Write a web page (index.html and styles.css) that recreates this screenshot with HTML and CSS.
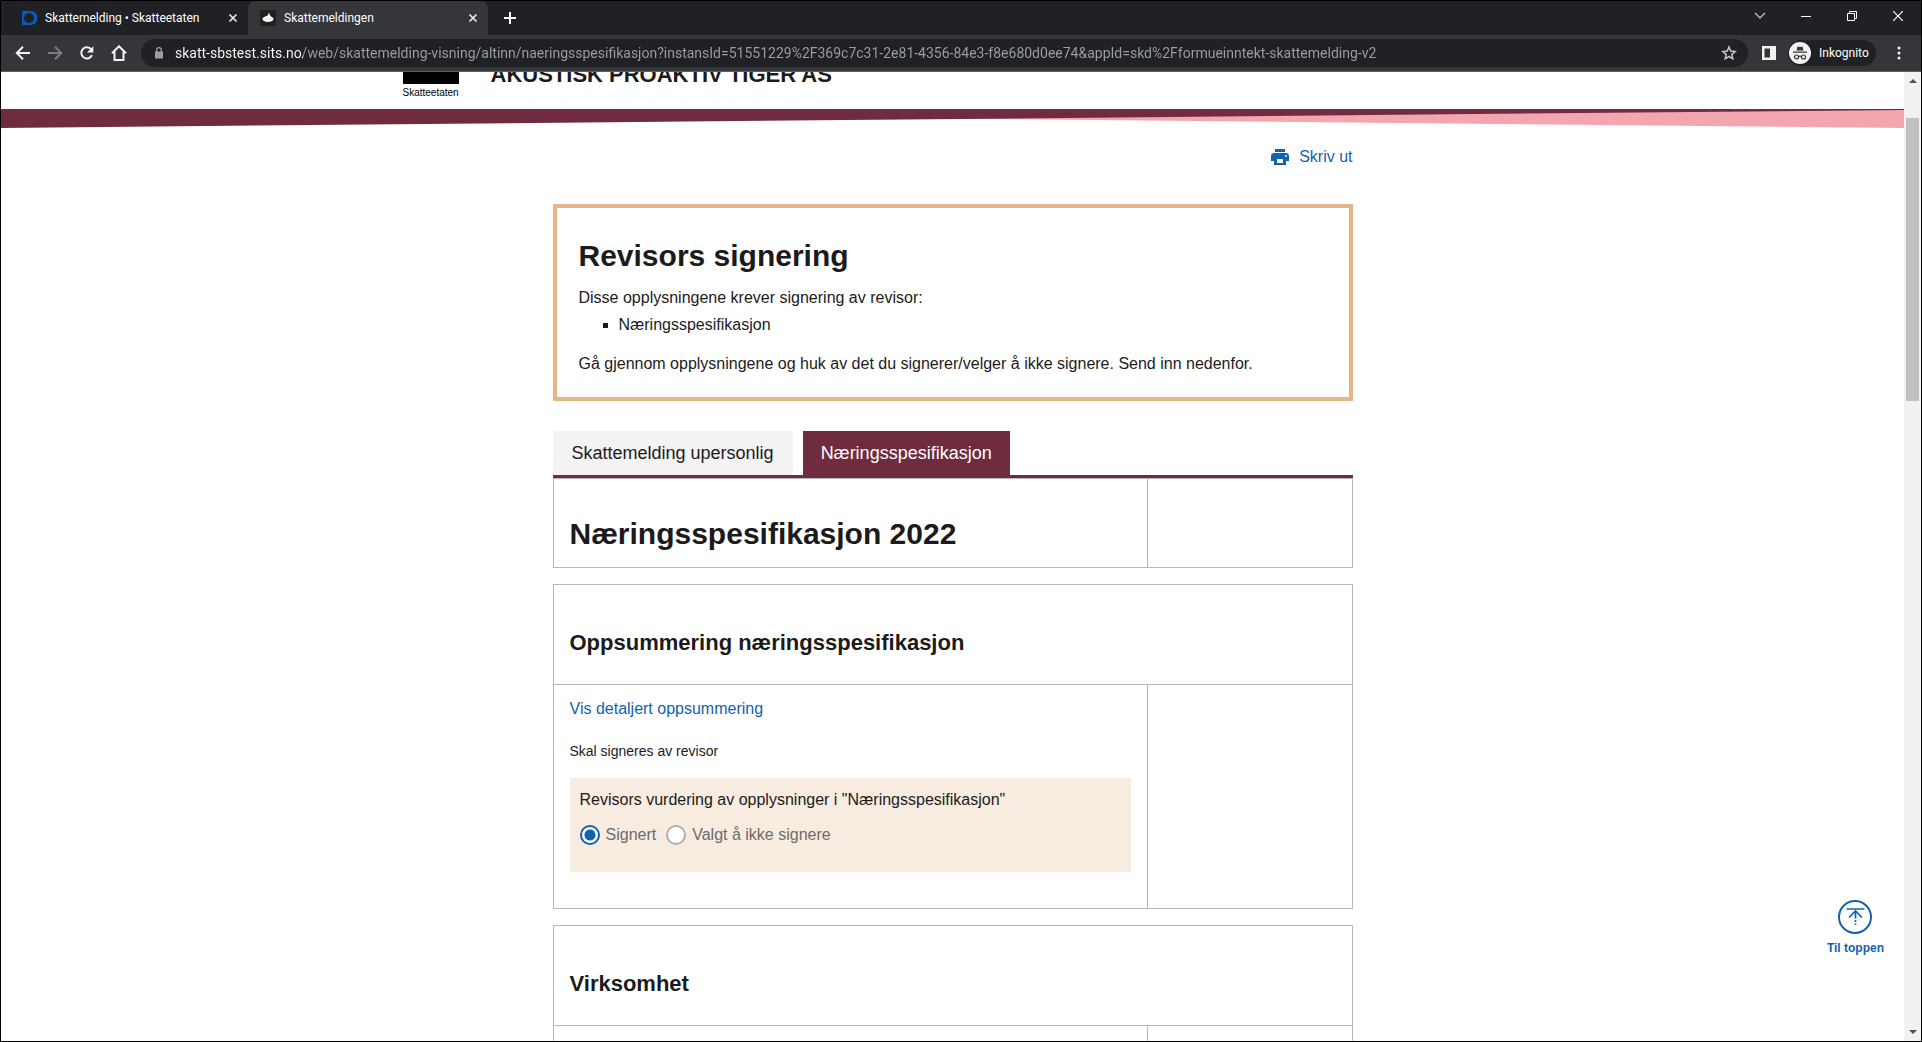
FILE: index.html
```
<!DOCTYPE html>
<html lang="no">
<head>
    <meta charset="UTF-8">
    <meta name="viewport" content="width=device-width, initial-scale=1.0">
    <title>Skattemeldingen</title>
    <link rel="stylesheet" href="styles.css">
</head>
<body>
    <div class="browser">
        <div class="tabstrip">
            <div class="browser-tab">
                <svg class="favicon" viewBox="0 0 16 16"><path d="M1 1h8.500a6.800 6.800 0 0 1 0 14H1z" fill="#0a5cb8"/><circle cx="8" cy="8" r="5" fill="#202124"/></svg>
                <span class="browser-tab-title">Skattemelding • Skatteetaten</span>
                <button class="icon-button" aria-label="Lukk fane"><svg width="10" height="10" viewBox="0 0 10 10"><path d="M1.500 1.500l7 7M8.500 1.500l-7 7" stroke="#e8eaed" stroke-width="1.700"/></svg></button>
            </div>
            <div class="browser-tab browser-tab-active">
                <svg class="favicon" viewBox="0 0 16 16"><path d="M0 0h16v16H0z" fill="#231f20"/><ellipse cx="8" cy="9" rx="5.500" ry="3" fill="#fff"/><path d="M7 7l1-3 1.500-1v2l1.500 1v2z" fill="#fff"/><path d="M4.500 8.500q3.500 2 7-.5" stroke="#bbb" stroke-width=".6" fill="none"/></svg>
                <span class="browser-tab-title">Skattemeldingen</span>
                <button class="icon-button" aria-label="Lukk fane"><svg width="10" height="10" viewBox="0 0 10 10"><path d="M1.500 1.500l7 7M8.500 1.500l-7 7" stroke="#e8eaed" stroke-width="1.700"/></svg></button>
            </div>
            <button class="icon-button new-tab" aria-label="Ny fane"><svg width="12" height="12" viewBox="0 0 12 12"><path d="M6 0v12M0 6h12" stroke="#fff" stroke-width="2"/></svg></button>
            <div class="window-buttons">
                <button class="icon-button" aria-label="Søk i faner"><svg width="12" height="12" viewBox="0 0 12 12"><path d="M1 3l5 5 5-5" fill="none" stroke="#d0d0d0" stroke-width="1.200"/></svg></button>
                <button class="icon-button" aria-label="Minimer"><svg width="10" height="10" viewBox="0 0 10 10"><path d="M0 5.500h10" stroke="#fff"/></svg></button>
                <button class="icon-button" aria-label="Gjenopprett"><svg width="10" height="10" viewBox="0 0 10 10"><path d="M.5 2.500h7v7h-7zM2.500 2.500v-2h7v7h-2" fill="none" stroke="#fff"/></svg></button>
                <button class="icon-button" aria-label="Lukk"><svg width="10" height="10" viewBox="0 0 10 10"><path d="M0 0l10 10M10 0L0 10" stroke="#fff" stroke-width="1.200"/></svg></button>
            </div>
        </div>

        <div class="toolbar">
            <button class="icon-button nav-button" aria-label="Tilbake"><svg width="16" height="16" viewBox="0 0 16 16"><path d="M15 8H2.500M8 1.800L1.800 8 8 14.200" fill="none" stroke="#f1f3f4" stroke-width="2"/></svg></button>
            <button class="icon-button nav-button" aria-label="Frem"><svg width="16" height="16" viewBox="0 0 16 16"><path d="M1 8h12.500M8 1.800L14.200 8 8 14.200" fill="none" stroke="#7d7e81" stroke-width="2"/></svg></button>
            <button class="icon-button nav-button" aria-label="Last inn på nytt"><svg width="16" height="16" viewBox="0 0 16 16"><path d="M13 10.200A5.600 5.600 0 1 1 12.300 4.400" fill="none" stroke="#f1f3f4" stroke-width="2"/><path d="M14.300 1.200v6.300H8z" fill="#f1f3f4"/></svg></button>
            <button class="icon-button nav-button" aria-label="Startside"><svg width="16" height="16" viewBox="0 0 16 16"><path d="M1 8.300L8 1.300l7 7M3.500 6.500v8.500h9V6.500" fill="none" stroke="#f1f3f4" stroke-width="2"/></svg></button>
            <div class="address-bar">
                <svg width="10" height="12" viewBox="0 0 10 12"><path d="M1 4.500h8V11.500H1z" fill="#9aa0a6"/><path d="M2.700 5V3a2.300 2.300 0 0 1 4.600 0v2" fill="none" stroke="#9aa0a6" stroke-width="1.300"/></svg>
                <input class="address" type="text" aria-label="Adresse" value="skatt-sbstest.sits.no/web/skattemelding-visning/altinn/naeringsspesifikasjon?instansId=51551229%2F369c7c31-2e81-4356-84e3-f8e680d0ee74&amp;appId=skd%2Fformueinntekt-skattemelding-v2">
                <button class="icon-button" aria-label="Bokmerk"><svg width="16" height="16" viewBox="0 0 16 16"><path d="M8 2l1.700 4.100 4.500.4-3.400 2.900 1 4.400L8 11.500l-3.800 2.300 1-4.400L1.800 6.500l4.500-.4z" fill="none" stroke="#c4c7c9" stroke-width="1.500"/></svg></button>
            </div>
            <button class="icon-button panel-button" aria-label="Sidepanel"><svg width="14" height="14" viewBox="0 0 14 14"><path d="M0 0h14v14H0z" fill="#f1f3f4"/><path d="M2.500 2.500H8v9H2.500z" fill="#35363a"/></svg></button>
            <button class="profile">
                <svg width="22" height="22" viewBox="0 0 22 22"><circle cx="11" cy="11" r="11" fill="#f1f3f4"/><path d="M7.500 8.500l1-4 2.500.5 2.500-.5 1 4zM4 9.500h14v1.200H4z" fill="#35363a"/><g fill="none" stroke="#35363a" stroke-width="1.200"><circle cx="7.500" cy="15" r="2"/><circle cx="14.500" cy="15" r="2"/><path d="M9.500 14.700q1.500-1 3 0"/></g></svg>
                Inkognito
            </button>
            <button class="icon-button menu-button" aria-label="Meny"><svg width="4" height="14" viewBox="0 0 4 14"><g fill="#f1f3f4"><circle cx="2" cy="2" r="1.500"/><circle cx="2" cy="7" r="1.500"/><circle cx="2" cy="12" r="1.500"/></g></svg></button>
        </div>

        <div class="viewport">
            <div class="page">
                <header class="page-header">
                    <div class="header-inner">
                        <div class="logo">
                            <span class="logo-mark"></span>
                            <span class="logo-name">Skatteetaten</span>
                        </div>
                        <p class="company">AKUSTISK PROAKTIV TIGER AS</p>
                    </div>
                </header>
                <svg class="stripe" viewBox="0 0 1904 19" preserveAspectRatio="none">
                    <path d="M950 9.500L1904 0v19z" fill="#f4a6b0"/>
                    <path d="M0 0h1904v1L0 19z" fill="#6f2c3f"/>
                </svg>

                <main class="content">
                    <a class="print" href="#">
                        <svg width="18" height="16" viewBox="0 0 18 16"><path d="M4 0h10v3H4zM3 4h12a3 3 0 0 1 3 3v5h-3V9H3v3H0V7a3 3 0 0 1 3-3z" fill="#1362ae"/><path d="M3 8h12v8H3z" fill="#1362ae"/><path d="M6 10h6v4H6z" fill="#fff"/><circle cx="15" cy="7" r="1" fill="#fff"/></svg>
                        Skriv ut
                    </a>

                    <section class="notice">
                        <h1>Revisors signering</h1>
                        <p>Disse opplysningene krever signering av revisor:</p>
                        <ul>
                            <li>Næringsspesifikasjon</li>
                        </ul>
                        <p>Gå gjennom opplysningene og huk av det du signerer/velger å ikke signere. Send inn nedenfor.</p>
                    </section>

                    <nav class="tabs">
                        <button class="tab">Skattemelding upersonlig</button>
                        <button class="tab tab-active">Næringsspesifikasjon</button>
                    </nav>

                    <section class="card">
                        <div class="row">
                            <div class="cell title-cell"><h1>Næringsspesifikasjon 2022</h1></div>
                            <div class="side"></div>
                        </div>
                    </section>

                    <section class="card">
                        <div class="card-heading"><h2>Oppsummering næringsspesifikasjon</h2></div>
                        <div class="row">
                            <div class="cell">
                                <a href="#">Vis detaljert oppsummering</a>
                                <p class="small">Skal signeres av revisor</p>
                                <fieldset class="signing">
                                    <legend>Revisors vurdering av opplysninger i "Næringsspesifikasjon"</legend>
                                    <div class="options">
                                        <input type="radio" name="vurdering" id="signert" checked>
                                        <label for="signert">Signert</label>
                                        <input type="radio" name="vurdering" id="ikke-signert">
                                        <label for="ikke-signert">Valgt å ikke signere</label>
                                    </div>
                                </fieldset>
                            </div>
                            <div class="side"></div>
                        </div>
                    </section>

                    <section class="card">
                        <div class="card-heading"><h2>Virksomhet</h2></div>
                        <div class="row">
                            <div class="cell"></div>
                            <div class="side"></div>
                        </div>
                    </section>
                </main>

                <a class="to-top" href="#">
                    <svg width="34" height="34" viewBox="0 0 34 34"><g fill="none" stroke="#1362ae"><circle cx="17" cy="17" r="16" stroke-width="2"/><path d="M8.500 9h18M11 17.500l6.500-6.500 6.500 6.500" stroke-width="1.700"/><path d="M17.500 11v7.500M17.500 20v2M17.500 23.500v1.500" stroke-width="1.700"/></g></svg>
                    Til toppen
                </a>
            </div>
            <div class="scrollbar">
                <svg width="8" height="4" viewBox="0 0 8 4"><path d="M0 4l4-4 4 4z" fill="#505050"/></svg>
                <div class="track"><div class="thumb"></div></div>
                <svg width="8" height="4" viewBox="0 0 8 4"><path d="M0 0l4 4 4-4z" fill="#505050"/></svg>
            </div>
        </div>
    </div>
</body>
</html>
```
FILE: styles.css
```
* {
    margin: 0;
    padding: 0;
    box-sizing: border-box;
}

body {
    font-family: Arial, "Liberation Sans", sans-serif;
    font-size: 16px;
    line-height: 24px;
    color: #1b1b1b;
    background: #fff;
}

a {
    color: #1362ae;
    text-decoration: none;
}

button {
    font: inherit;
    color: inherit;
    background: none;
    border: none;
    cursor: pointer;
}

svg {
    display: block;
    flex: none;
}

.browser {
    display: flex;
    flex-direction: column;
    height: 100vh;
    overflow: hidden;
    border: 1px solid #000;
}

/* Browser window */
.tabstrip,
.toolbar {
    display: flex;
    align-items: center;
    flex: none;
    font-family: Roboto, "Open Sans", sans-serif;
    font-size: 12px;
    line-height: 16px;
    color: #fff;
}

.tabstrip {
    height: 34px;
    background: #202124;
}

.icon-button {
    display: flex;
    align-items: center;
    justify-content: center;
    flex: none;
}

.browser-tab {
    display: flex;
    align-items: center;
    gap: 8px;
    width: 247px;
    height: 34px;
    padding: 0 10px 0 20px;
}

.browser-tab-active {
    width: 240px;
    padding: 0 10px 0 12px;
    border-radius: 8px 8px 0 0;
    background: #35363a;
}

.browser-tab-title {
    flex: 1;
    white-space: nowrap;
}

.favicon {
    width: 16px;
    height: 16px;
}

.new-tab {
    margin-left: 16px;
}

.window-buttons {
    display: flex;
    margin-left: auto;
    margin-bottom: 4px;
}

.window-buttons .icon-button {
    width: 46px;
    height: 30px;
}

.toolbar {
    height: 37px;
    padding-left: 6px;
    background: #35363a;
    border-bottom: 1px solid #5f5e63;
}

.nav-button {
    width: 32px;
    height: 32px;
}

.address-bar {
    display: flex;
    align-items: center;
    flex: 1;
    height: 28px;
    margin-left: 6px;
    padding: 0 11px 0 13px;
    border-radius: 14px;
    background: #202124;
}

/* The host name is white, the rest of the address grey */
.address {
    flex: 1;
    margin-left: 11px;
    border: none;
    outline: none;
    font: 14px/20px Roboto, "Open Sans", sans-serif;
    color: transparent;
    background: linear-gradient(90deg, #fff 128px, #9aa0a6 128px);
    -webkit-background-clip: text;
    background-clip: text;
}

.panel-button {
    width: 30px;
    margin-left: 6px;
}

.profile {
    display: flex;
    align-items: center;
    gap: 8px;
    width: 88px;
    height: 26px;
    margin-left: 4px;
    padding-left: 1px;
    border-radius: 13px;
    background: #202124;
}

.menu-button {
    width: 45px;
}

.viewport {
    display: flex;
    flex: 1;
    min-height: 0;
}

.page {
    position: relative;
    flex: 1;
    overflow: hidden;
}

.scrollbar {
    display: flex;
    flex-direction: column;
    align-items: center;
    width: 17px;
    padding: 7px 0;
    background: #f1f1f1;
}

.track {
    flex: 1;
    width: 13px;
    padding-top: 35px;
}

.thumb {
    height: 31%;
    background: #c1c1c1;
}

/* Page header, scrolled partly out of view */
.page-header {
    display: flex;
    align-items: flex-end;
    height: 37px;
    overflow: hidden;
}

.header-inner {
    display: flex;
    gap: 32px;
    width: 1100px;
    margin: 0 auto;
}

.logo {
    display: flex;
    flex-direction: column;
    width: 56px;
    height: 60px;
}

.logo-mark {
    height: 35px;
    background: #000;
}

.logo-name {
    font-size: 10px;
    line-height: 18px;
    color: #000;
}

.company {
    font-size: 22px;
    line-height: 28px;
    font-weight: bold;
    margin-top: 12px;
}

.stripe {
    width: 100%;
    height: 19px;
}

/* Page content */
.content {
    display: flex;
    flex-direction: column;
    width: 800px;
    margin: 0 auto;
    padding-top: 17px;
}

.print {
    display: flex;
    align-items: center;
    align-self: flex-end;
    gap: 10px;
}

h1 {
    font-size: 30px;
    line-height: 36px;
}

h2 {
    font-size: 22px;
    line-height: 28px;
}

.notice {
    margin-top: 35px;
    padding: 30px 22px 21px;
    border: 4px solid #e5b588;
}

.notice h1 {
    margin-bottom: 12px;
}

.notice ul {
    margin: 3px 0 15px;
    padding-left: 40px;
    list-style: square;
}

.notice p {
    line-height: 24px;
}

.tabs {
    display: flex;
    gap: 10px;
    margin-top: 30px;
    border-bottom: 3px solid #6f2c3f;
}

.tab {
    height: 44px;
    padding: 0 19px;
    font-size: 18px;
    background: #f3f3f3;
}

.tab-active {
    padding: 0 18px;
    color: #fff;
    background: #6f2c3f;
}

.card {
    margin-bottom: 16px;
    border: 1px solid #b8b8b8;
}

.row {
    display: grid;
    grid-template-columns: 1fr 205px;
}

.cell {
    padding: 12px 16px 36px;
}

.title-cell {
    padding: 37px 16px 15px;
}

.side {
    border-left: 1px solid #b8b8b8;
}

.card-heading {
    padding: 44px 16px 27px;
    border-bottom: 1px solid #b8b8b8;
}

.small {
    margin: 18px 0 15px;
    font-size: 14px;
}

.signing {
    height: 94px;
    padding: 10px;
    border: none;
    background: #f8ece1;
}

.signing legend {
    float: left;
    width: 100%;
}

.options {
    display: flex;
    align-items: center;
    gap: 6px;
    clear: both;
    padding-top: 11px;
    color: #6b6b6b;
}

.options input {
    appearance: none;
    width: 20px;
    height: 20px;
    border: 2px solid #b0b0b0;
    border-radius: 50%;
    background: #fff;
}

.options input:checked {
    border-color: #1362ae;
    background: radial-gradient(#1362ae 5px, #fff 6px);
}

.options label {
    margin-right: 4px;
}

.to-top {
    position: absolute;
    right: 20px;
    bottom: 81px;
    display: flex;
    flex-direction: column;
    align-items: center;
    gap: 2px;
    font-size: 12px;
    font-weight: bold;
}
```
